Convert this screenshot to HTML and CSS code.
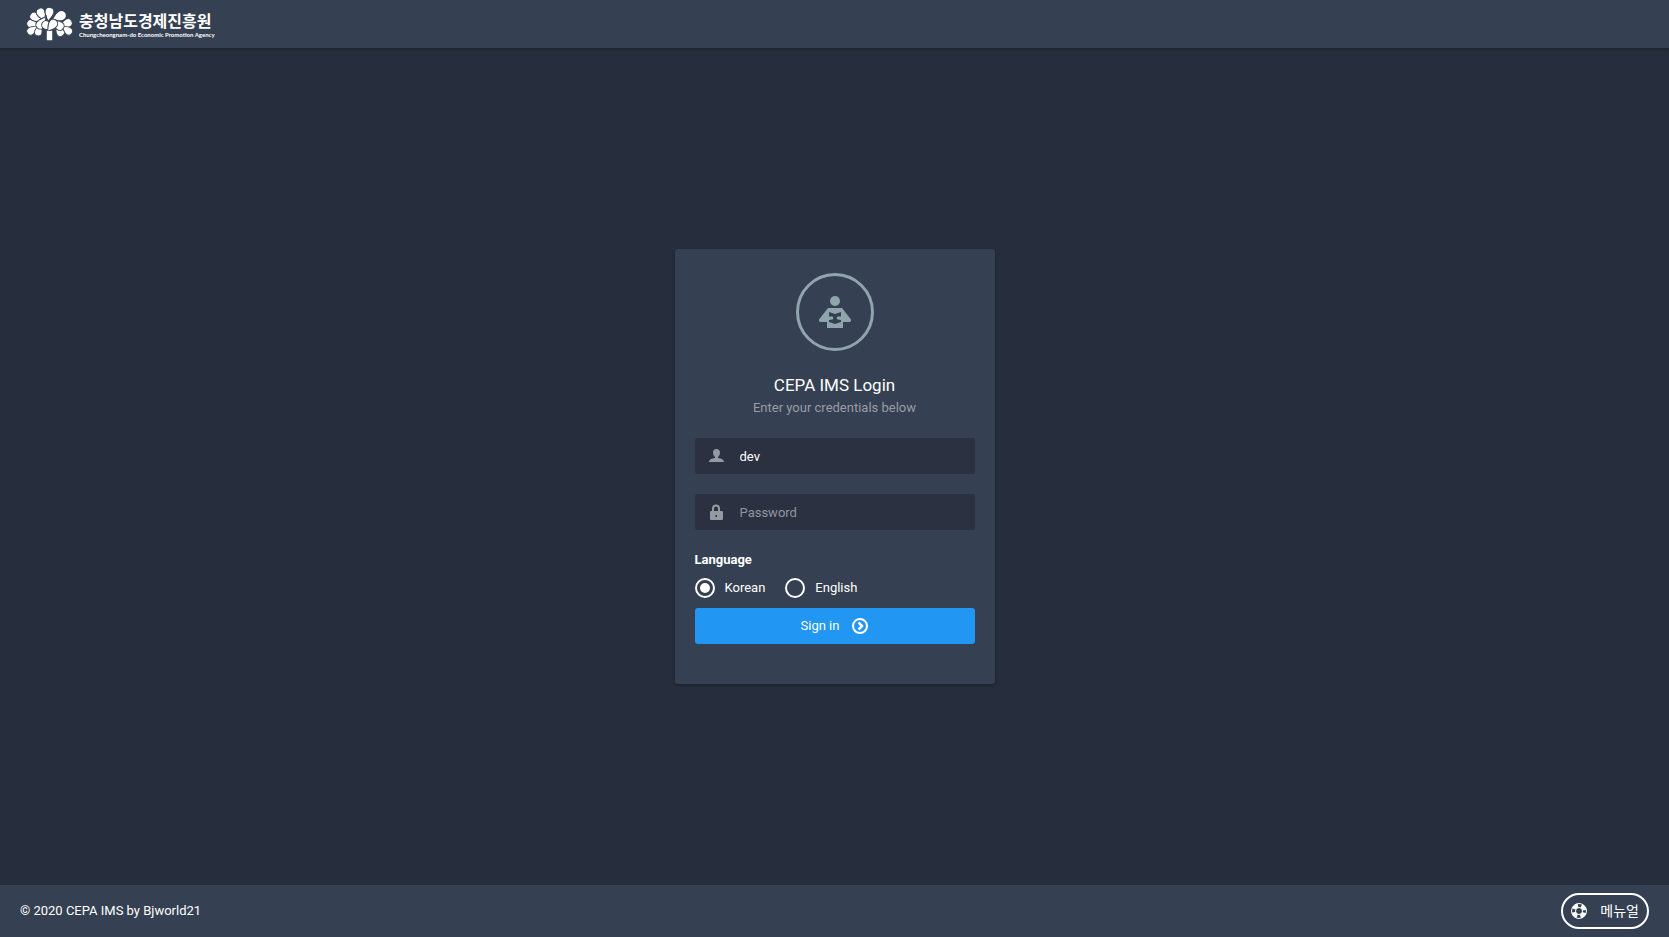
FILE: index.html
```html
<!DOCTYPE html>
<html lang="ko">
<head>
    <meta charset="UTF-8">
    <meta name="viewport" content="width=device-width, initial-scale=1.0">
    <title>CEPA IMS Login</title>
    <link rel="stylesheet" href="styles.css">
</head>
<body>
    <header class="navbar">
        <a href="#" class="brand">
            <svg class="brand-tree" viewBox="20 20 138 100" aria-hidden="true">
                <defs>
                    <path id="leaf" d="M0 30C-3 20-13 13-13 0A13 13 0 0 1 13 0C13 13 3 20 0 30Z"/>
                </defs>
                <g fill="#fff" stroke="#354052" stroke-width="3">
                    <use href="#leaf" transform="translate(35 69) rotate(-70)"/>
                    <use href="#leaf" transform="translate(143 67) rotate(66)"/>
                    <use href="#leaf" transform="translate(34 91) rotate(-125) scale(.9)"/>
                    <use href="#leaf" transform="translate(145 91) rotate(125) scale(.9)"/>
                    <use href="#leaf" transform="translate(56 94) rotate(-165) scale(.85)"/>
                    <use href="#leaf" transform="translate(121 95) rotate(150) scale(.9)"/>
                    <use href="#leaf" transform="translate(44 48) rotate(-58)"/>
                    <use href="#leaf" transform="translate(63 36) rotate(-25)"/>
                    <use href="#leaf" transform="translate(89 34) rotate(8)"/>
                    <use href="#leaf" transform="translate(124 45) rotate(62) scale(1.15)"/>
                    <use href="#leaf" transform="translate(62 72) rotate(-145)"/>
                    <use href="#leaf" transform="translate(119 76) rotate(130)"/>
                    <use href="#leaf" transform="translate(79 73) rotate(-65)"/>
                    <use href="#leaf" transform="translate(100 69) rotate(35)"/>
                </g>
                <path d="M81 89Q89 92 97 89V118H81Z" fill="#fff"/>
            </svg>
            <span class="brand-text">
                <strong>충청남도경제진흥원</strong>
                <small>Chungcheongnam-do Economic Promotion Agency</small>
            </span>
        </a>
    </header>

    <main class="content">
        <form class="login-card">
            <div class="login-head">
                <span class="login-icon">
                    <svg viewBox="0 0 32 32" width="32" height="32" fill="currentColor" aria-hidden="true">
                        <circle cx="16" cy="5" r="5"/>
                        <path fill-rule="evenodd" d="M9 12H23L32 23.500Q32.500 26 30 26H24V32H8V26H2Q-.5 26 0 23.500ZM10 16V20.500H13.500Q15 22 13.500 23.500L10 24V26L16 28L22 26V24L18.500 23.500Q17 22 18.500 20.500H22V16L16 18Z"/>
                    </svg>
                </span>
                <h1>CEPA IMS Login</h1>
                <p>Enter your credentials below</p>
            </div>

            <div class="field">
                <svg viewBox="0 0 16 16" width="16" height="16" fill="currentColor" aria-hidden="true">
                    <path d="M7.500 1C5.200 1 4 2.500 4 4.700C4 6.500 4.900 8.200 6 9V10C2.500 10.300 0 12 0 14H15C15 12 12.500 10.300 9 10V9C10.100 8.200 11 6.500 11 4.700C11 2.500 9.800 1 7.500 1Z"/>
                </svg>
                <input type="text" value="dev" placeholder="Username" aria-label="Username">
            </div>
            <div class="field">
                <svg viewBox="0 0 16 16" width="16" height="16" fill="currentColor" aria-hidden="true">
                    <path fill-rule="evenodd" d="M2 7H3V4.500A4 4 0 0 1 11 4.500V7H13Q14 7 14 8V15Q14 16 13 16H2Q1 16 1 15V8Q1 7 2 7ZM5 7H9V4.500A2 2 0 0 0 5 4.500ZM6.500 11V13H8V11Z"/>
                </svg>
                <input type="password" placeholder="Password" aria-label="Password">
            </div>

            <fieldset class="language">
                <legend>Language</legend>
                <div class="options">
                    <label><input type="radio" name="language" value="ko" checked>Korean</label>
                    <label><input type="radio" name="language" value="en">English</label>
                </div>
            </fieldset>

            <button type="submit" class="btn-signin">
                Sign in
                <svg viewBox="0 0 16 16" width="16" height="16" fill="none" stroke="currentColor" stroke-width="2" aria-hidden="true">
                    <circle cx="8" cy="8" r="7"/>
                    <path d="M6.500 4.500L10 8L6.500 11.500" stroke-width="2.500"/>
                </svg>
            </button>
        </form>
    </main>

    <footer class="footer">
        <span>© 2020 CEPA IMS by <a href="#">Bjworld21</a></span>
        <button type="button" class="btn-manual">
            <svg viewBox="0 0 16 16" width="16" height="16" fill="none" stroke="currentColor" aria-hidden="true">
                <circle cx="8" cy="8" r="7.500"/>
                <circle cx="8" cy="8" r="3.500"/>
                <!-- the four solid parts of the ring -->
                <circle cx="8" cy="8" r="5.500" stroke-width="4" stroke-dasharray="5.200 3.440" stroke-dashoffset="-1.720"/>
            </svg>
            메뉴얼
        </button>
    </footer>
</body>
</html>
```

FILE: styles.css
```css
* {
    box-sizing: border-box;
}

body {
    display: flex;
    flex-direction: column;
    min-height: 100vh;
    margin: 0;
    background-color: #262d3c;
    color: #fff;
    font-family: Roboto, "Noto Sans CJK KR", sans-serif;
    font-size: 13px;
    line-height: 20px;
}

a {
    color: inherit;
    text-decoration: none;
}

button,
input {
    font: inherit;
    color: inherit;
}

/* top bar */
.navbar {
    display: flex;
    align-items: center;
    height: 49px;
    padding: 0 26px;
    background-color: #354052;
    border-bottom: 1px solid #1f2531;
    box-shadow: 0 1px 3px rgba(0, 0, 0, .2);
}

.brand {
    display: flex;
    align-items: center;
    gap: 6px;
}

.brand-tree {
    width: 47px;
    height: 34px;
}

.brand-text {
    display: flex;
    flex-direction: column;
    padding-top: 2px;
    font-family: "Noto Sans CJK KR", sans-serif;
    white-space: nowrap;
}

.brand-text strong {
    font-size: 16px;
    line-height: 20px;
}

.brand-text small {
    font-family: Lato, sans-serif;
    font-size: 6px;
    font-weight: 700;
    line-height: 10px;
}

/* login */
.content {
    display: flex;
    flex: 1;
    align-items: center;
    justify-content: center;
}

.login-card {
    width: 320px;
    padding: 20px 20px 40px;
    background-color: #354052;
    border-radius: 3px;
    box-shadow: 0 1px 3px rgba(0, 0, 0, .3);
}

.login-head {
    margin-bottom: 20px;
    text-align: center;
}

.login-icon {
    display: flex;
    align-items: center;
    justify-content: center;
    width: 78px;
    height: 78px;
    margin: 4px auto 21px;
    border: 3px solid #90a4ae;
    border-radius: 50%;
    color: #90a4ae;
}

.login-head h1 {
    margin: 0;
    font-size: 17px;
    font-weight: 400;
    line-height: 26px;
}

.login-head p {
    margin: 0;
    color: #999ca5;
}

.field {
    display: flex;
    align-items: center;
    gap: 15px;
    height: 36px;
    margin-bottom: 20px;
    padding: 0 14px;
    background-color: #2b3140;
    border-radius: 3px;
    color: #959aa2;
}

.field input {
    flex: 1;
    min-width: 0;
    padding: 2px 0 0;
    background: none;
    border: 0;
    outline: 0;
    color: #fff;
}

.field input::placeholder {
    color: #92959d;
    opacity: 1;
}

.language {
    margin: 0 0 10px;
    padding: 0;
    border: 0;
}

.language legend {
    margin-bottom: 8px;
    padding: 0;
    font-weight: 700;
}

.options {
    display: flex;
    gap: 20px;
}

.options label {
    display: flex;
    align-items: center;
    gap: 10px;
}

.options input {
    appearance: none;
    width: 20px;
    height: 20px;
    margin: 0;
    border: 2px solid #fff;
    border-radius: 50%;
}

.options input:checked {
    padding: 3px;
    background: #fff content-box;
}

.btn-signin {
    display: flex;
    align-items: center;
    justify-content: center;
    gap: 13px;
    width: 100%;
    height: 36px;
    padding: 0;
    background-color: #2196f3;
    border: 0;
    border-radius: 3px;
}

/* bottom bar */
.footer {
    display: flex;
    align-items: center;
    justify-content: space-between;
    height: 53px;
    padding: 0 20px;
    background-color: #354052;
    border-top: 1px solid #262d3a;
}

.btn-manual {
    display: flex;
    align-items: center;
    gap: 13px;
    height: 36px;
    padding: 0 8px;
    background: none;
    border: 2px solid #fff;
    border-radius: 18px;
    font-size: 14px;
}
```
